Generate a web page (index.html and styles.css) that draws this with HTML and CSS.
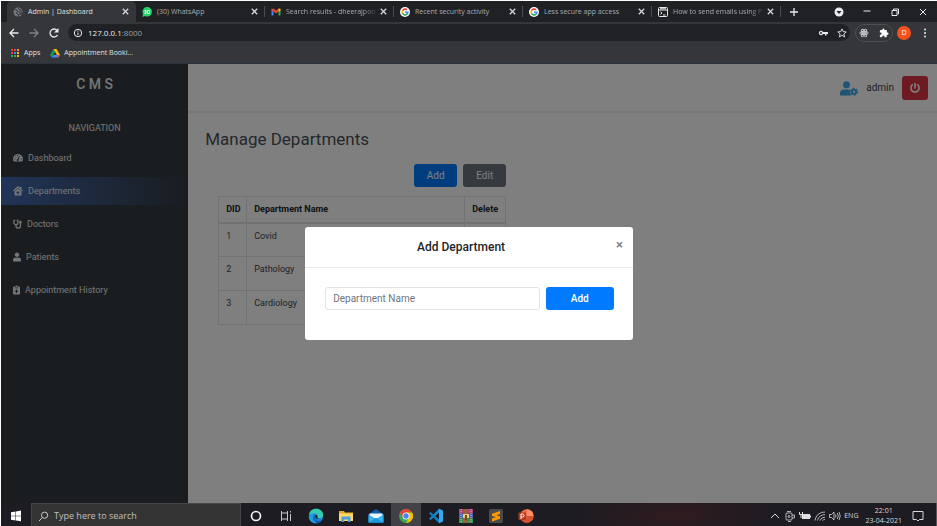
FILE: index.html
```html
<!DOCTYPE html>
<html lang="en">
<head>
<meta charset="utf-8">
<title>Admin | Dashboard</title>
<link rel="stylesheet" href="styles.css">
</head>
<body>
<svg class="defs" aria-hidden="true">
  <symbol id="google" viewBox="0 0 24 24"><circle cx="12" cy="12" r="12" fill="#fff"/><g fill="none" stroke-width="4"><path d="M6 9A7 7 0 0 1 17 7" stroke="#ea4335"/><path d="M6 8.500A7 7 0 0 0 6 15.500" stroke="#fbbc05"/><path d="M6 15A7 7 0 0 0 17 17" stroke="#34a853"/><path d="M12 12.500H19Q19 15 16.500 17.500" stroke="#4285f4"/></g></symbol>
  <symbol id="close" viewBox="0 0 10 10"><path d="M2 2l6 6M8 2L2 8" fill="none" stroke="currentColor" stroke-width="1.400"/></symbol>
</svg>

<header class="browser">
  <div class="tabstrip">
    <div class="tabs">
      <div class="tab active">
        <svg class="fav" viewBox="0 0 20 20"><circle cx="10" cy="10" r="9" fill="#74777b"/><path d="M3 5l5 1 2 3-3 2 1 3 4 1-2 4M11 2l1 3 5 2M13 9l5 2-3 5z" fill="none" stroke="#35363a" stroke-width="2"/></svg>
        <span class="tab-title">Admin | Dashboard</span>
        <button class="tab-close" aria-label="Close tab"><svg><use href="#close"/></svg></button>
      </div>
      <div class="tab">
        <svg class="fav" viewBox="0 0 20 20"><path d="M1 20l1-6A9.500 9.500 0 1 1 6 18z" fill="#25d366"/><path d="M5 7h3v6H5M5 10h3M11 7h4v6h-4z" fill="none" stroke="#fff" stroke-width="1.500"/></svg>
        <span class="tab-title">(30) WhatsApp</span>
        <button class="tab-close" aria-label="Close tab"><svg><use href="#close"/></svg></button>
      </div>
      <div class="tab">
        <svg class="fav" viewBox="0 0 20 20"><path d="M1 4v13h4V8z" fill="#4285f4"/><path d="M19 4v13h-4V8z" fill="#34a853"/><path d="M1 4l4-1 5 4 5-4v6l-5 4-5-4-4-3z" fill="#ea4335"/><path d="M15 3q4-1 4 2v2l-4 3z" fill="#fbbc04"/></svg>
        <span class="tab-title faded">Search results - dheerajpoo</span>
        <button class="tab-close" aria-label="Close tab"><svg><use href="#close"/></svg></button>
      </div>
      <div class="tab">
        <svg class="fav"><use href="#google"/></svg>
        <span class="tab-title">Recent security activity</span>
        <button class="tab-close" aria-label="Close tab"><svg><use href="#close"/></svg></button>
      </div>
      <div class="tab">
        <svg class="fav"><use href="#google"/></svg>
        <span class="tab-title">Less secure app access</span>
        <button class="tab-close" aria-label="Close tab"><svg><use href="#close"/></svg></button>
      </div>
      <div class="tab">
        <svg class="fav" viewBox="0 0 20 20" fill="none" stroke="#e4e6e8" stroke-width="2"><rect x="1" y="1" width="18" height="18" rx="2"/><path d="M1 6h18M4 3.500h12M5 10l3 2-3 3M10 16h5"/></svg>
        <span class="tab-title faded">How to send emails using P</span>
        <button class="tab-close" aria-label="Close tab"><svg><use href="#close"/></svg></button>
      </div>
    </div>
    <button class="newtab" aria-label="New tab"><svg viewBox="0 0 10 10"><path d="M5 1v8M1 5h8" stroke="currentColor" stroke-width="1.300"/></svg></button>
    <div class="window-controls">
      <button aria-label="Tab search"><svg viewBox="0 0 10 10"><circle cx="5" cy="5" r="4.500" fill="#e8eaed"/><path d="M2.500 4h5L5 7z" fill="#202124"/></svg></button>
      <button aria-label="Minimize"><svg viewBox="0 0 10 10"><path d="M1.500 4h7" stroke="currentColor"/></svg></button>
      <button aria-label="Restore"><svg viewBox="0 0 10 10" fill="none" stroke="currentColor"><path d="M2 3.500h5v5H2zM3.500 3V2h5v5h-1"/></svg></button>
      <button aria-label="Close"><svg viewBox="0 0 10 10"><path d="M2 2l6 6M8 2L2 8" stroke="currentColor"/></svg></button>
    </div>
  </div>

  <div class="toolbar">
    <button aria-label="Back"><svg viewBox="0 0 12 12" fill="none" stroke="currentColor" stroke-width="1.300"><path d="M10.500 6H2M6 2L2 6l4 4"/></svg></button>
    <button class="off" aria-label="Forward"><svg viewBox="0 0 12 12" fill="none" stroke="currentColor" stroke-width="1.300"><path d="M1.500 6H10M6 2l4 4-4 4"/></svg></button>
    <button aria-label="Reload"><svg viewBox="0 0 12 12" fill="none" stroke="currentColor" stroke-width="1.300"><path d="M9.500 8A4 4 0 1 1 9 3.300"/><path d="M10.500 1v4.500H6z" fill="currentColor" stroke="none"/></svg></button>
    <div class="omnibox">
      <svg viewBox="0 0 10 10" fill="none" stroke="currentColor"><circle cx="5" cy="5" r="3.700"/><path d="M5 4.500v2.600M5 2.700v1"/></svg>
      <span class="url">127.0.0.1<span>:8000</span></span>
      <svg viewBox="0 0 10 10"><path d="M3 2.800a2.200 2.200 0 1 0 2 3.200h2v1.500h1.500V6H10V4H5a2.200 2.200 0 0 0-2-1.200zM3 4a1 1 0 1 1 0 2 1 1 0 0 1 0-2z" fill="currentColor" fill-rule="evenodd"/></svg>
      <svg viewBox="0 0 10 10"><path d="M5 .900l1.200 2.700 3 .3-2.300 2 .7 3L5 7.300 2.400 8.900l.7-3-2.300-2 3-.3z" fill="none" stroke="currentColor" stroke-width=".900"/></svg>
    </div>
    <div class="extensions">
      <svg viewBox="0 0 20 20" fill="none" stroke="#cfd1d4" stroke-width="1.800"><circle cx="10" cy="10" r="1.500" fill="#fff"/><ellipse cx="10" cy="10" rx="8.500" ry="3.500"/><ellipse cx="10" cy="10" rx="8.500" ry="3.500" transform="rotate(60 10 10)"/><ellipse cx="10" cy="10" rx="8.500" ry="3.500" transform="rotate(120 10 10)"/></svg>
      <svg viewBox="0 0 24 24"><path d="M20.500 11H19V7a2 2 0 0 0-2-2h-4V3.500a2.500 2.500 0 0 0-5 0V5H4a2 2 0 0 0-2 2v3.800h1.500a2.700 2.700 0 0 1 0 5.400H2V20c0 1.100.9 2 2 2h3.800v-1.500a2.700 2.700 0 0 1 5.400 0V22H17a2 2 0 0 0 2-2v-4h1.500a2.500 2.500 0 0 0 0-5z" fill="#fff"/></svg>
    </div>
    <button class="avatar" aria-label="Profile">D</button>
    <button aria-label="Menu"><svg viewBox="0 0 12 12" fill="currentColor"><circle cx="6" cy="2.500" r="1"/><circle cx="6" cy="6" r="1"/><circle cx="6" cy="9.500" r="1"/></svg></button>
  </div>

  <nav class="bookmarks">
    <a href="#"><svg viewBox="0 0 10 10"><path d="M1 1h2v2H1zM1 4h2v2H1z" fill="#ea4335"/><path d="M4 1h2v2H4z" fill="#ea4335"/><path d="M7 1h2v2H7z" fill="#fb8c3c"/><path d="M4 4h2v2H4z" fill="#4285f4"/><path d="M7 4h2v2H7zM7 7h2v2H7z" fill="#fbbc05"/><path d="M1 7h2v2H1zM4 7h2v2H4z" fill="#34a853"/></svg>Apps</a>
    <a href="#"><svg viewBox="0 0 20 20"><path d="M7 2L0 14l3 5 7-12z" fill="#0f9d58"/><path d="M7 2h6l7 12h-6z" fill="#fbbc04"/><path d="M6.500 14H20l-3 5H3z" fill="#4285f4"/><path d="M14 14h6l-3 5z" fill="#ea4335"/></svg>Appointment Booki...</a>
  </nav>
</header>

<div class="page">
  <aside class="sidebar">
    <div class="brand">C M S</div>
    <div class="nav-label">NAVIGATION</div>
    <nav class="menu">
      <a href="#"><svg class="w10" viewBox="0 0 20 20"><path d="M10 2A10 10 0 0 0 1.500 17h17A10 10 0 0 0 10 2z" fill="currentColor"/><path d="M9.500 14L13 6M3 12h2M5 7l1.500 1.500M9 4v2M15.500 12h2" stroke="#343a40" stroke-width="1.800"/><circle cx="9.500" cy="14" r="2" fill="#343a40"/></svg>Dashboard</a>
      <a href="#" class="current"><svg class="w10" viewBox="0 0 20 20"><path d="M10 0L0 9l1.500 2L10 3.500l8.500 7.500L20 9l-3-2.700V2h-3v1.600z" fill="currentColor"/><path d="M10 5l-7 6.200V19h14v-7.800zM9 10h2v2.500h2.500v2H11V17H9v-2.500H6.500v-2H9z" fill="currentColor" fill-rule="evenodd"/></svg>Departments</a>
      <a href="#"><svg class="w9" viewBox="0 0 20 20" fill="none" stroke="currentColor" stroke-width="2.700"><path d="M5 2H2v5a4.500 4.500 0 0 0 9 0V2H8M6.500 11.500V14a5 5 0 0 0 10 0V8"/><circle cx="16.500" cy="6" r="1.800"/></svg>Doctors</a>
      <a href="#"><svg class="w8" viewBox="0 0 448 512"><path fill="currentColor" d="M224 256c70.700 0 128-57.300 128-128S294.700 0 224 0 96 57.300 96 128s57.300 128 128 128zm89.600 32h-16.700c-22.200 10.200-46.900 16-72.900 16s-50.600-5.800-72.900-16h-16.700C60.200 288 0 348.200 0 422.400V464c0 26.500 21.500 48 48 48h352c26.500 0 48-21.500 48-48v-41.600c0-74.200-60.200-134.400-134.400-134.400z"/></svg>Patients</a>
      <a href="#"><svg class="w7" viewBox="0 0 14 18"><path d="M2 2h3a2 2 0 0 1 4 0h3q2 0 2 2v12q0 2-2 2H2q-2 0-2-2V4q0-2 2-2zM4 4v1.500h6V4zM6 8v2.500H3.500v2H6V15h2v-2.500h2.500v-2H8V8z" fill="currentColor" fill-rule="evenodd"/></svg>Appointment History</a>
    </nav>
  </aside>

  <main class="content">
    <div class="topbar">
      <svg class="user-cog" viewBox="0 0 36 30"><circle cx="13" cy="7.500" r="7" fill="#3cabea"/><path d="M0 29v-4q0-8 8-8h10q3 0 3 3l-1 4q1 3 3 5z" fill="#3cabea"/><circle cx="28" cy="21.500" r="4.200" fill="none" stroke="#3cabea" stroke-width="4"/><circle cx="28" cy="21.500" r="6.600" fill="none" stroke="#3cabea" stroke-width="3" stroke-dasharray="3.500 3.400"/></svg>
      <span>admin</span>
      <button class="power" aria-label="Log out"><svg viewBox="0 0 512 512"><path fill="currentColor" d="M400 54.100c63 45 104 118.600 104 201.900 0 136.800-110.800 247.700-247.500 248C120 504.300 8.200 393 8 256.400 7.900 173.100 48.900 99.300 111.800 54.200c11.700-8.300 28-4.800 35 7.700L162.600 90c5.900 10.500 3.100 23.800-6.600 31-41.500 30.800-68 79.600-68 134.900-.1 92.300 74.500 168.100 168 168.100 91.600 0 168.600-74.200 168-169.100-.3-51.800-24.700-101.800-68.100-134-9.700-7.200-12.400-20.500-6.500-30.900l15.800-28.100c7-12.400 23.200-16.100 34.800-7.800zM296 264V24c0-13.300-10.700-24-24-24h-32c-13.300 0-24 10.700-24 24v240c0 13.300 10.700 24 24 24h32c13.300 0 24-10.700 24-24z"/></svg></button>
    </div>
    <h1>Manage Departments</h1>
    <section class="departments">
      <div class="actions">
        <button class="btn primary">Add</button>
        <button class="btn secondary">Edit</button>
      </div>
      <table>
        <thead><tr><th class="did">DID</th><th>Department Name</th><th class="del">Delete</th></tr></thead>
        <tbody>
          <tr><td>1</td><td>Covid</td><td></td></tr>
          <tr><td>2</td><td>Pathology</td><td></td></tr>
          <tr><td>3</td><td>Cardiology</td><td></td></tr>
        </tbody>
      </table>
    </section>
  </main>

  <div class="backdrop">
    <div class="modal" role="dialog" aria-labelledby="modal-title">
      <div class="modal-head">
        <h2 id="modal-title">Add Department</h2>
        <button class="modal-close" aria-label="Close">×</button>
      </div>
      <form class="modal-body">
        <input type="text" aria-label="Department Name" placeholder="Department Name">
        <button type="button" class="btn primary">Add</button>
      </form>
    </div>
  </div>
</div>

<footer class="taskbar">
  <button class="task start" aria-label="Start"><svg viewBox="0 0 12 12"><path d="M1 2.200l4.500-.7v4.200H1zM6 1.400l5-.8v5.100H6zM1 6.200h4.500v4.200L1 9.800zM6 6.200h5v5.100l-5-.8z" fill="#fff"/></svg></button>
  <label class="search">
    <svg viewBox="0 0 12 12" fill="none" stroke="#d8d8d8"><circle cx="7.200" cy="4.600" r="3.400"/><path d="M4.700 7.200L1 11"/></svg>
    <input type="text" placeholder="Type here to search" aria-label="Search">
  </label>
  <button class="task" aria-label="Cortana"><svg viewBox="0 0 16 16"><circle cx="8" cy="8" r="4.500" fill="none" stroke="#f2f2f2" stroke-width="1.700"/></svg></button>
  <button class="task" aria-label="Task view"><svg viewBox="0 0 16 16" fill="none" stroke="#c8c8c8"><path d="M3.500 3v2h6V3M3.500 13v-2h6v2M3.500 5v6M9.500 5v6M12.500 6v7M12.500 3v1.500"/></svg></button>
  <button class="task" aria-label="Edge"><svg viewBox="0 0 16 16"><circle cx="8" cy="8" r="7.200" fill="#1683d8"/><path d="M1 7C1.500 3 4.500.800 8 .800c4 0 7.200 2.700 7.200 6 0 2.500-2 3.700-4 3.700-1.500 0-2.200-.6-1.700-1.400C10.300 7 8.500 5.400 6 5.400c-2 0-4 .8-5 1.600z" fill="#39c9b0"/><path d="M6.500 6C3.800 7.300 4 13.500 9.500 15 5 16.200 1 13 .800 9 .800 6 4 5 6.500 6z" fill="#1b9de2"/><path d="M6.800 7c-1.300 3 .5 6 4 6 1.500 0 2.700-.5 3.700-1.200-1 2-3 3.400-5 3.400C5 14 4.500 8.500 6.800 7z" fill="#0c59a4"/><path d="M7.500 7c1.500 0 2.300 1 1.800 2.100-.5 1 .5 1.500 2 1.400-2 1-5-.5-3.800-3.500z" fill="#1c1c22"/></svg></button>
  <button class="task" aria-label="File Explorer"><svg viewBox="0 0 16 16"><path d="M1 3h5l1 1.500h8V13H1z" fill="#e9ac2e"/><path d="M1 5.500h14V13H1z" fill="#ffd867"/><path d="M3.500 8.500h9V14h-2.300v-2.500H5.800V14H3.500z" fill="#4b9fe0"/></svg></button>
  <button class="task" aria-label="Mail"><svg viewBox="0 0 16 16"><path d="M.500 6.500L8 1l7.500 5.500v8H.500z" fill="#0f5fae"/><path d="M1.500 5.500h13v5h-13z" fill="#e9f6fd"/><path d="M.500 6.500L8 11l7.500-4.500v8H.500z" fill="#35b5f0"/><path d="M.500 14.500L8 10l7.500 4.500z" fill="#2097dd"/></svg></button>
  <button class="task open" aria-label="Chrome"><svg viewBox="0 0 16 16"><circle cx="8" cy="8" r="7" fill="#34a853"/><path d="M1.900 4.500A7 7 0 0 1 14.100 4.500H8L5 9.800z" fill="#ea4335"/><path d="M14.100 4.500A7 7 0 0 1 8 15L11 9.700 8 4.500z" fill="#fbbc04"/><circle cx="8" cy="8" r="3.500" fill="#fff"/><circle cx="8" cy="8" r="2.700" fill="#4285f4"/></svg></button>
  <button class="task" aria-label="Visual Studio Code"><svg viewBox="0 0 16 16"><path d="M11 .800L15 2.500v11l-4 1.700z" fill="#33aaf0"/><path d="M11 .800v4L2.500 12 1 10.700z" fill="#1688d0"/><path d="M11 15.200v-4L2.500 4 1 5.300z" fill="#147ac0"/></svg></button>
  <button class="task" aria-label="WinRAR"><svg viewBox="0 0 16 16"><path d="M1 1h14v4.600H1z" fill="#b3437b"/><path d="M1 5.600h14v4.600H1z" fill="#4968bc"/><path d="M1 10.200h14V15H1z" fill="#399553"/><path d="M3 1v14M13 1v14" stroke="#ddb7bd" stroke-dasharray="1 1"/><path d="M6 1h4v14H6z" fill="#9b6335"/><path d="M5 6h6v4H5z" fill="#e8ca79"/><path d="M7 7h2v5H7z" fill="#754528"/></svg></button>
  <button class="task" aria-label="Sublime Text"><svg viewBox="0 0 16 16"><rect x="1" y="1" width="14" height="14" rx="2" fill="#4b4b4b"/><path d="M4 5.800L12 3v3L8.500 7.200 12 8.400v2.300L4 13.500v-3l4-1.400-4-1.200z" fill="#ff9800"/></svg></button>
  <button class="task" aria-label="PowerPoint"><svg viewBox="0 0 16 16"><circle cx="8.800" cy="8" r="6.800" fill="#ed6c47"/><path d="M8.800 1.200a6.800 6.800 0 0 1 6.800 6.800H8.800z" fill="#ff8f6b"/><path d="M15.600 8a6.800 6.800 0 0 1-13.600 0z" fill="#d35230"/><rect x=".500" y="4.500" width="7.500" height="7.500" rx="1" fill="#b7351b"/><path d="M3 11V6h1.500q1.500 0 1.500 1.500T4.500 9H3" fill="none" stroke="#fff"/></svg></button>
  <div class="tray">
    <svg viewBox="0 0 12 12" fill="none" stroke="currentColor"><path d="M2 8l4-4 4 4"/></svg>
    <svg viewBox="0 0 12 12" fill="none" stroke="currentColor" stroke-width=".800"><rect x="2" y="3" width="6" height="7" rx="1"/><path d="M3 1.500h4M8 5h2.500v3H8M4 11.500h3"/><circle cx="5" cy="6.500" r="1"/></svg>
    <svg viewBox="0 0 12 12"><path d="M3 4h8v5H3z" fill="#e0e0e0"/><path d="M11 5.500h1v2h-1z" fill="#e0e0e0"/><path d="M.500 2v2.500h3V2M2 4v4" fill="none" stroke="#e0e0e0"/></svg>
    <svg viewBox="0 0 12 12" fill="none" stroke="currentColor" stroke-width=".800"><path d="M1 10.500A9.500 9.500 0 0 1 11 2M3.500 10.500A7 7 0 0 1 11 4.700M6 10.500a5 5 0 0 1 5-3.300M8.500 10.500A3 3 0 0 1 11 9.500"/></svg>
    <svg viewBox="0 0 12 12" fill="none" stroke="currentColor" stroke-width=".800"><path d="M.500 4.500h2L5 2v8L2.500 7.500h-2zM6.500 4.500q1 1.500 0 3M8.300 3q2 3 0 6M10 2q2.500 4 0 8"/></svg>
    <span>ENG</span>
    <div class="clock"><span>22:01</span><span>23-04-2021</span></div>
    <button class="notes" aria-label="Notifications"><svg viewBox="0 0 12 12" fill="none" stroke="currentColor"><path d="M1 1.500h10v8H7.500L6 11 4.500 9.500H1z"/></svg></button>
  </div>
</footer>
</body>
</html>
```
FILE: styles.css
```css
* { box-sizing: border-box; }
body {
  margin: 0;
  padding: 1px 0 0 1px;
  min-height: 100vh;
  display: flex;
  flex-direction: column;
  background: #fff;
  font-family: Roboto, sans-serif;
  font-size: 9px;
  line-height: 12px;
  color: #212529;
}
button, input { font: inherit; color: inherit; border: 0; padding: 0; margin: 0; background: none; }
a { color: inherit; text-decoration: none; }
svg { display: block; flex: none; }
.defs { display: none; }

/* Browser window */
.browser {
  background: #35363a;
  color: #dee1e6;
  font-family: "Open Sans", sans-serif;
  font-size: 7px;
  border-bottom: 1px solid #29323a;
}
.tabstrip { display: flex; align-items: center; height: 21px; padding-left: 6px; background: #202124; }
.tabs { display: flex; flex: 0 1 774px; align-self: stretch; min-width: 0; }
.tab {
  flex: 1 1 0;
  min-width: 0;
  display: flex;
  align-items: center;
  gap: 5px;
  padding: 0 6px 0 6px;
  color: #a8acb1;
  background: linear-gradient(#4a4c50, #4a4c50) right center / 1px 11px no-repeat;
}
.tab.active { background: #35363a; color: #dee1e6; border-radius: 5px 5px 0 0; }
.fav { width: 10px; height: 10px; }
.tab-title { flex: 1; min-width: 0; white-space: nowrap; }
.faded { mask-image: linear-gradient(to right, #000 82%, transparent); }
.tab-close { margin-left: -5px; }
.tab-close svg { width: 9px; height: 9px; color: #d5d7da; }
.newtab { margin-left: 8px; color: #e8eaed; }
.newtab svg { width: 10px; height: 10px; }
.window-controls { display: flex; margin-left: auto; color: #e8eaed; }
.window-controls button { width: 28px; display: flex; justify-content: center; }
.window-controls svg { width: 10px; height: 10px; }
.toolbar { display: flex; align-items: center; gap: 8px; height: 21px; padding: 0 6px 0 7px; color: #e8eaed; }
.toolbar > button svg { width: 12px; height: 12px; }
.toolbar .off { color: #808286; }
.omnibox {
  flex: 1;
  display: flex;
  align-items: center;
  gap: 9px;
  height: 17px;
  padding: 0 3px 0 5px;
  border-radius: 9px;
  background: #202124;
  font-size: 8px;
}
.omnibox svg { width: 10px; height: 10px; }
.url { flex: 1; margin-left: -4px; }
.url span { color: #9aa0a6; }
.extensions { display: flex; gap: 10px; padding: 3px; margin: 0 -4px 0 -3px; border: 1px solid #4d4f53; border-radius: 9px; }
.extensions svg { width: 10px; height: 10px; }
.avatar { width: 14px; height: 14px; border-radius: 50%; background: #f4511e; color: #fff; font-size: 7px; }
.bookmarks { display: flex; align-items: center; gap: 10px; height: 20px; padding-left: 9px; }
.bookmarks a { display: flex; align-items: center; gap: 4px; }
.bookmarks svg { width: 10px; height: 10px; }

/* Application */
.page { position: relative; flex: 1; display: flex; background: #fff; }
.sidebar { width: 20%; background: #343a40; color: #e9ecef; }
.brand { padding: 12px 0; text-align: center; font-size: 14px; line-height: 16px; font-weight: 500; }
.nav-label { margin: 18px 0 10px; text-align: center; }
.menu { display: flex; flex-direction: column; gap: 5px; }
.menu a { display: flex; align-items: center; gap: 5px; height: 28px; padding: 0 12px; }
.menu a.current { background: linear-gradient(to right, #426ab0, #343a40); }
.menu svg { height: 10px; }
.w10 { width: 10px; }
.w9 { width: 9px; }
.w8 { width: 8px; }
.w7 { width: 7px; }
.content { flex: 1; min-width: 0; color: #3f454b; }
.topbar {
  display: flex;
  align-items: center;
  justify-content: flex-end;
  gap: 8px;
  height: 49px;
  padding: 1px 9px 0 0;
  border-bottom: 2px solid #eeeeee;
  font-size: 10px;
}
.user-cog { width: 18px; height: 15px; }
.power { display: grid; place-items: center; width: 26px; height: 24px; border-radius: 3px; background: #dc3545; color: #fff; }
.power svg { width: 10px; height: 10px; }
h1 { margin: 15px 0 0 17px; font-size: 17px; line-height: 22px; font-weight: 400; color: #495057; }
.departments { width: 288px; margin: 14px 0 0 30px; }
.actions { display: flex; justify-content: flex-end; gap: 6px; margin-bottom: 9px; }
.btn { width: 43px; height: 23px; border-radius: 3px; color: #fff; font-size: 10px; }
.primary { background: #007bff; }
.secondary { background: #6c757d; }
table { width: 100%; border-collapse: collapse; table-layout: fixed; }
th, td { height: 34px; padding: 6px 7px; border: 1px solid #dee2e6; text-align: left; vertical-align: top; }
th { height: 26px; border-bottom-width: 2px; font-weight: 700; color: #212529; white-space: nowrap; }
.did { width: 28px; }
.del { width: 41px; }

/* Dialog */
.backdrop { position: absolute; inset: 0; display: grid; place-items: center; background: rgba(0, 0, 0, 0.5); }
.modal { width: 35%; min-width: 280px; border-radius: 3px; background: #fff; }
.modal-head { display: flex; align-items: flex-start; padding: 11px 10px 10px; border-bottom: 1px solid #e9ecef; }
h2 { flex: 1; margin: 0; padding-right: 9px; text-align: center; font-size: 12px; line-height: 19px; font-weight: 500; }
.modal-close { font-size: 13px; line-height: 14px; font-weight: 700; color: #7f7f7f; }
.modal-body { display: flex; gap: 6px; padding: 19px 19px 30px 20px; }
.modal-body input { flex: 1; min-width: 0; height: 23px; padding: 0 7px; border: 1px solid #dfe3e7; border-radius: 3px; font-size: 10px; }
.modal-body input::placeholder { color: #6c757d; opacity: 1; }
.modal-body .btn { width: 68px; font-weight: 500; }

/* Desktop taskbar */
.taskbar {
  display: flex;
  align-items: stretch;
  height: 23px;
  background: radial-gradient(ellipse 110px 30px at 72% 50%, #301b20, #1c1c22);
  color: #d8d8d8;
  font-family: "Open Sans", sans-serif;
  font-size: 7px;
}
.task { display: grid; place-items: center; flex: 0 1 30px; padding-top: 2px; }
.task svg { width: 16px; height: 16px; }
.start svg { width: 12px; height: 12px; }
.open { background: #414146; }
.search { display: flex; align-items: center; gap: 5px; flex: 0 1 210px; padding: 2px 6px 0; background: #333; border: 1px solid #45454a; border-bottom: 0; }
.search svg { width: 11px; height: 11px; }
.search input { flex: 1; min-width: 0; font-size: 9px; }
.search input::placeholder { color: #c0c0c0; opacity: 1; }
.tray { display: flex; align-items: center; gap: 3px; margin-left: auto; padding: 2px 12px 0 0; border-right: 1px solid #55555a; }
.tray svg { width: 12px; height: 12px; }
.clock { display: flex; flex-direction: column; align-items: center; line-height: 10px; margin: 0 7px 0 4px; }
```
